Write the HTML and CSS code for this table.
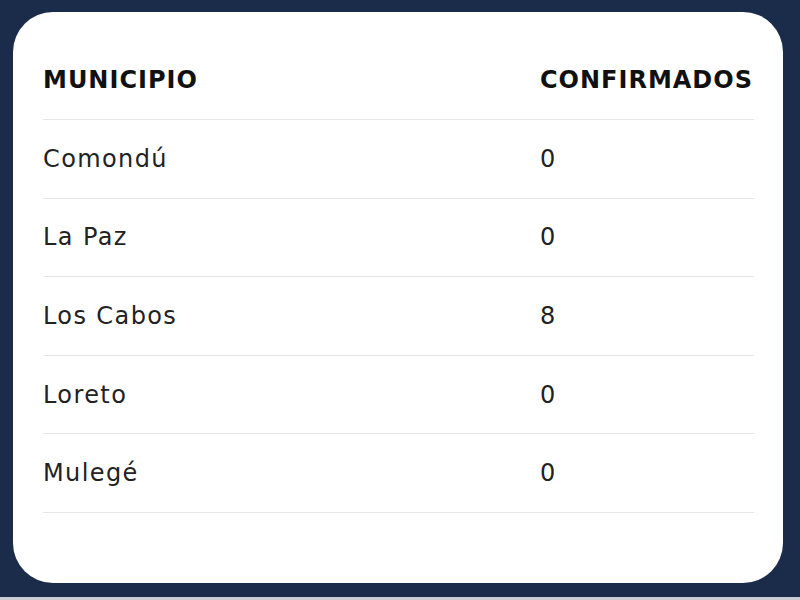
FILE: index.html
```html
<!DOCTYPE html>
<html lang="es">
<head>
<meta charset="utf-8">
<link rel="stylesheet" href="styles.css">
</head>
<body>
<div class="page">
  <div class="card">
    <table class="tbl">
      <thead>
        <tr><th class="c1">MUNICIPIO</th><th class="c2">CONFIRMADOS</th></tr>
      </thead>
      <tbody>
        <tr><td>Comondú</td><td>0</td></tr>
        <tr><td>La Paz</td><td>0</td></tr>
        <tr><td>Los Cabos</td><td>8</td></tr>
        <tr><td>Loreto</td><td>0</td></tr>
        <tr><td>Mulegé</td><td>0</td></tr>
      </tbody>
    </table>
  </div>
</div>
<div class="strip"></div>
</body>
</html>
```
FILE: styles.css
```css
html, body {
  margin: 0;
  padding: 0;
}
body {
  width: 800px;
  height: 600px;
  background: #1a2c4a;
  font-family: "DejaVu Sans", "Open Sans", sans-serif;
  color: #222222;
  overflow: hidden;
}
.page {
  height: 597px;
  box-sizing: border-box;
  padding: 12px 17px 14px 13px;
}
.card {
  background: #ffffff;
  border-radius: 40px;
  height: 100%;
  box-sizing: border-box;
  padding: 28px 29px 0 30px;
}
.tbl {
  width: 100%;
  border-collapse: collapse;
}
.tbl th, .tbl td {
  text-align: left;
  padding: 0;
  border-bottom: 1px solid #e6e6e6;
  vertical-align: middle;
  font-size: 24px;
}
.tbl th {
  height: 79px;
  font-weight: 600;
  letter-spacing: 1px;
  color: #111111;
}
.tbl td {
  height: 77.6px;
  font-weight: 400;
  letter-spacing: 1.4px;
}
.tbl .c1 {
  width: 497px;
}
.strip {
  height: 3px;
  background: #c9ccd2;
}
```
